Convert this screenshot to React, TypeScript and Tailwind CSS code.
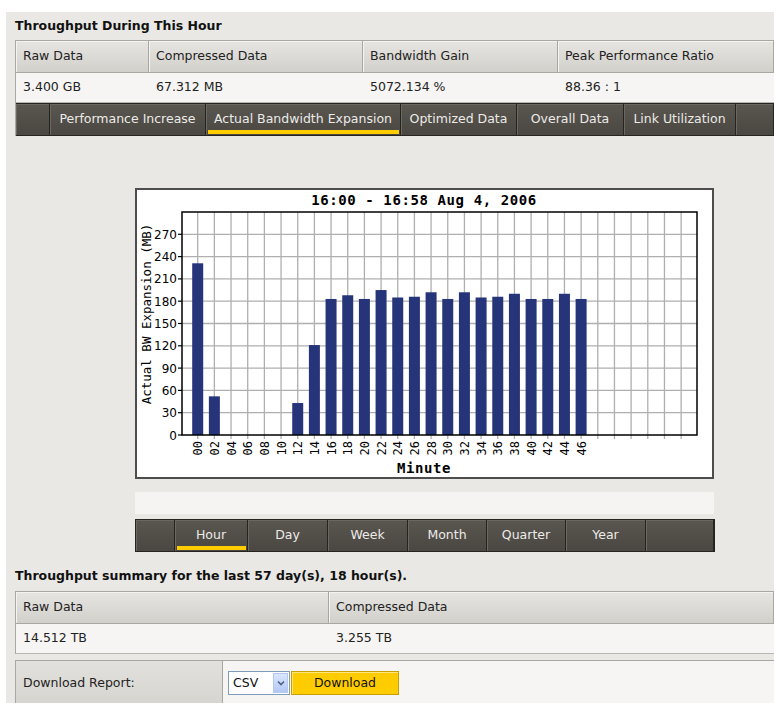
import React from 'react';

const sans = { fontFamily: '"DejaVu Sans", Verdana, sans-serif' };
const mono = '"DejaVu Sans Mono", "Liberation Mono", monospace';

// MB per two-minute slot, 16:00 - 16:46
const expansion = [231, 52, 0, 0, 0, 0, 43, 121, 183, 188, 183, 195, 185, 186, 192, 183, 192, 185, 186, 190, 183, 183, 190, 183];

const topTabs = ['Performance Increase', 'Actual Bandwidth Expansion', 'Optimized Data', 'Overall Data', 'Link Utilization'];
const topTabWidths = ['w-[156px]', 'w-[195px]', 'w-[116px]', 'w-[107px]', 'w-[112px]'];
const ranges = ['Hour', 'Day', 'Week', 'Month', 'Quarter', 'Year'];
const rangeWidths = ['w-[73px]', 'w-[80px]', 'w-[80px]', 'w-[79px]', 'w-[79px]', 'w-[80px]'];

function Chart() {
  const left = 45, right = 560, top = 22, bottom = 245;
  const step = 16.67;
  const x0 = 60.7;
  const yPer = (bottom - top) / 300;
  const ticks = Array.from({ length: 30 }, (_, i) => i);
  const levels = Array.from({ length: 10 }, (_, i) => i * 30);

  return (
    <svg width="575" height="287" viewBox="0 0 575 287">
      <text x="287" y="15" textAnchor="middle" fontFamily={mono} fontWeight="bold" fontSize="14" letterSpacing="0.6" fill="#000">
        16:00 - 16:58 Aug 4, 2006
      </text>
      {levels.slice(1).map(v => (
        <line key={v} x1={left} x2={right} y1={bottom - v * yPer} y2={bottom - v * yPer} stroke="#afafaf" strokeWidth="1.3" />
      ))}
      {ticks.map(i => (
        <line key={i} x1={x0 + i * step} x2={x0 + i * step} y1={top} y2={bottom + 4} stroke="#afafaf" strokeWidth="1.3" />
      ))}
      {expansion.map((v, i) => (
        v > 0 && <rect key={i} x={x0 + i * step - 5.5} y={bottom - v * yPer} width="11" height={v * yPer} fill="#26357a" />
      ))}
      <rect x={left} y={top} width={right - left} height={bottom - top} fill="none" stroke="#000" strokeWidth="1.5" />
      {levels.map(v => (
        <g key={v}>
          <line x1={left - 4} x2={left} y1={bottom - v * yPer} y2={bottom - v * yPer} stroke="#000" strokeWidth="1.2" />
          <text x={left - 5} y={bottom - v * yPer + 4.5} textAnchor="end" fontFamily='"DejaVu Sans", sans-serif' fontSize="12" fill="#000">
            {v}
          </text>
        </g>
      ))}
      {ticks.slice(0, 24).map(i => (
        <text key={i} transform={`translate(${x0 + i * step + 4.5} 251) rotate(-90)`} textAnchor="end" fontFamily={mono} fontSize="12" fill="#000">
          {String(i * 2).padStart(2, '0')}
        </text>
      ))}
      <text transform="translate(14 124) rotate(-90)" textAnchor="middle" fontFamily={mono} fontSize="12.5" fill="#000">
        Actual BW Expansion (MB)
      </text>
      <text x="287" y="283" textAnchor="middle" fontFamily={mono} fontWeight="bold" fontSize="14" letterSpacing="0.6" fill="#000">
        Minute
      </text>
    </svg>
  );
}

function HeaderCell({ w, children }: { w: string; children?: React.ReactNode }) {
  return (
    <div className={`${w} h-full flex items-center pl-[7px] border-r border-b border-[#a9a7a2] shadow-[inset_1px_1px_0_#f4f3f0] bg-gradient-to-b from-[#e6e5e1] to-[#d2d0cb] text-[12.5px] text-[#222]`}>
      {children}
    </div>
  );
}

function DataCell({ w, children }: { w: string; children?: React.ReactNode }) {
  return (
    <div className={`${w} h-full flex items-center pl-[7px] border-b border-[#b9b7b2] text-[12.5px] text-[#222]`}>
      {children}
    </div>
  );
}

function TabCell({ w, label, active }: { w: string; label?: string; active?: boolean }) {
  return (
    <div className={`${w} relative h-full flex items-center justify-center border-r border-[#262421] shadow-[inset_1px_1px_0_#6b6761] bg-gradient-to-b from-[#5a5650] to-[#4a4641] text-[12.5px] text-[#ecebe7]`}>
      {label}
      {active && <div className="absolute left-[2px] right-[1px] bottom-[1px] h-[4px] bg-[#ffcc00]" />}
    </div>
  );
}

export default function App() {
  return (
    <div className="w-[774px] h-[703px] bg-white pt-[12px] pl-[6px] overflow-hidden" style={sans}>
      <div className="h-full bg-[#e9e8e4] pl-[9px]">
        <div className="h-[28px] flex items-center pt-[1px] text-[12.5px] font-bold text-[#111]">Throughput During This Hour</div>

        <div className="border-l border-t border-[#a9a7a2]">
          <div className="flex h-[32px]">
            <HeaderCell w="w-[133px]">Raw Data</HeaderCell>
            <HeaderCell w="w-[214px]">Compressed Data</HeaderCell>
            <HeaderCell w="w-[195px]">Bandwidth Gain</HeaderCell>
            <HeaderCell w="flex-1">Peak Performance Ratio</HeaderCell>
          </div>
          <div className="flex h-[30px] bg-[#f6f5f3]">
            <DataCell w="w-[133px]">3.400 GB</DataCell>
            <DataCell w="w-[214px]">67.312 MB</DataCell>
            <DataCell w="w-[195px]">5072.134 %</DataCell>
            <DataCell w="flex-1">88.36 : 1</DataCell>
          </div>
          <div className="flex h-[33px] border-y border-[#262421]">
            <TabCell w="w-[34px]" />
            {topTabs.map((t, i) => (
              <TabCell key={t} w={topTabWidths[i]} label={t} active={i === 1} />
            ))}
            <TabCell w="flex-1" />
          </div>
        </div>

        <div className="ml-[120px] mt-[52px] w-[579px]">
          <div className="h-[291px] bg-white border-2 border-[#4d4d4d]">
            <Chart />
          </div>
          <div className="mt-[13px] h-[22px] bg-[#f5f4f2]" />
          <div className="mt-[5px] w-[580px] flex h-[33px] border border-[#262421]">
            <TabCell w="w-[39px]" />
            {ranges.map((r, i) => (
              <TabCell key={r} w={rangeWidths[i]} label={r} active={i === 0} />
            ))}
            <TabCell w="flex-1" />
          </div>
        </div>

        <div className="h-[39px] flex items-end pb-[5px] text-[12.5px] font-bold text-[#111]">
          Throughput summary for the last 57 day(s), 18 hour(s).
        </div>

        <div className="border-l border-t border-[#a9a7a2]">
          <div className="flex h-[32px]">
            <HeaderCell w="w-[313px]">Raw Data</HeaderCell>
            <HeaderCell w="flex-1">Compressed Data</HeaderCell>
          </div>
          <div className="flex h-[30px] bg-[#f6f5f3]">
            <DataCell w="w-[313px]">14.512 TB</DataCell>
            <DataCell w="flex-1">3.255 TB</DataCell>
          </div>
        </div>

        <div className="mt-[6px] flex h-[45px] border-l border-t border-[#a9a7a2]">
          <div className="w-[207px] h-full flex items-center pl-[7px] border-r border-[#a9a7a2] bg-gradient-to-b from-[#e2e1dd] to-[#d6d4cf] text-[12.5px] text-[#222]">
            Download Report:
          </div>
          <div className="flex-1 h-full bg-[#f6f5f3] flex items-center pl-[5px]">
            <div className="flex items-center h-[24px] w-[62px] bg-white border border-[#7f9db9] pl-[4px] text-[12.5px] text-[#111]">
              CSV
              <div className="ml-auto mr-[1px] w-[15px] h-[20px] bg-gradient-to-b from-[#dbe6fd] to-[#b4c8f5] border border-[#b5c8f2] flex items-center justify-center">
                <svg width="8" height="6" viewBox="0 0 8 6"><path d="M1 1.5 L4 4.5 L7 1.5" stroke="#4d6185" strokeWidth="1.6" fill="none" /></svg>
              </div>
            </div>
            <div className="ml-[1px] w-[108px] h-[24px] bg-[#ffcc00] border border-[#c79f00] shadow-[inset_1px_1px_0_#ffe680] flex items-center justify-center text-[12.5px] text-[#111]">
              Download
            </div>
          </div>
        </div>
      </div>
    </div>
  );
}
